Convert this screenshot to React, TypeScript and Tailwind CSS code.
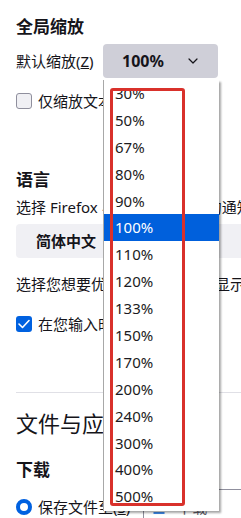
import React from "react";

const zoomLevels = ["30%", "50%", "67%", "80%", "90%", "100%", "110%", "120%", "133%", "150%", "170%", "200%", "240%", "300%", "400%", "500%"];

const ZoomList = () => {
  return (
    <div className="absolute left-[103px] top-[80px] w-[116px] h-[431px] bg-white border-l border-[#a8a8a8] shadow-[2px_2px_2px_rgba(0,0,0,0.35)] overflow-hidden">
      {zoomLevels.map((z) => (
        <div
          key={z}
          className={
            z === "100%"
              ? "h-[26.9px] flex items-center pl-[11px] text-[15px] leading-none bg-[#0060dc] text-white"
              : "h-[26.9px] flex items-center pl-[11px] text-[15px] leading-none text-[#1c1b22]"
          }
        >
          {z}
        </div>
      ))}
    </div>
  );
};

export default function App() {
  return (
    <div
      className="relative w-[241px] h-[518px] overflow-hidden bg-white text-[#15141a] whitespace-nowrap"
      style={{ fontFamily: '"Noto Sans", "Noto Sans CJK SC", sans-serif' }}
    >
      <div className="flex flex-col pl-4 pt-[15px]">
        <h2 className="text-[17px] font-bold leading-[24px]">全局缩放</h2>

        {/* default zoom row */}
        <div className="mt-[5px] flex items-center h-[34px]">
          <span className="w-[87px] shrink-0 text-[15px] leading-[20px]">
            默认缩放(<span className="underline">Z</span>)
          </span>
          <div className="w-[115px] shrink-0 h-[34px] rounded-[4px] bg-[#cfcfd8] flex items-center pl-[19px]">
            <span className="text-[16px] font-bold leading-none">100%</span>
            <svg className="ml-auto mr-[20px]" width="10" height="6" viewBox="0 0 10 6" fill="none">
              <path d="M1 1l4 4 4-4" stroke="#15141a" strokeWidth="1.2" strokeLinecap="round" strokeLinejoin="round" />
            </svg>
          </div>
        </div>

        <div className="mt-[13px] flex items-center h-[20px] gap-[6px]">
          <div className="w-4 h-4 shrink-0 rounded-[3px] border border-[#8f8f9d] bg-[#f0f0f4]" />
          <span className="text-[15px] leading-[20px]">仅缩放文本</span>
        </div>

        {/* language */}
        <h2 className="mt-[57px] text-[17px] font-bold leading-[24px]">语言</h2>
        <p className="mt-[5px] text-[15px] leading-[20px]">选择 Firefox 界面菜单、消息的通知语言</p>
        <div className="mt-[7px] flex gap-2">
          <div className="w-[140px] shrink-0 h-[34px] rounded-[4px] bg-[#f0f0f4] flex items-center pl-[20px]">
            <span className="text-[15px] font-bold leading-none">简体中文</span>
          </div>
          <div className="w-[140px] shrink-0 h-[34px] rounded-[4px] bg-[#f0f0f4]" />
        </div>
        <p className="mt-[16px] text-[15px] leading-[20px]">选择您想要优先用的网页语言 显示</p>
        <div className="mt-[20px] flex items-center h-[20px] gap-[6px]">
          <div className="w-4 h-4 shrink-0 rounded-[3px] bg-[#0061e0] flex items-center justify-center">
            <svg width="12" height="10" viewBox="0 0 12 10" fill="none">
              <path d="M1 5l3.5 3.5L11 1.5" stroke="white" strokeWidth="1.6" strokeLinecap="round" strokeLinejoin="round" />
            </svg>
          </div>
          <span className="text-[15px] leading-[20px]">在您输入时检查拼写</span>
        </div>

        <div className="mt-[58px] border-t border-[#e0e0e6]" />

        {/* files and applications */}
        <h1 className="mt-[15px] text-[22px] font-normal leading-[30px]">文件与应用程序</h1>
        <h2 className="mt-[20px] text-[17px] font-bold leading-[24px]">下载</h2>
        <div className="mt-[7px] flex items-center h-[36px]">
          <div className="w-4 h-4 shrink-0 rounded-full border-[4px] border-[#0061e0] bg-white" />
          <span className="ml-[6px] shrink-0 text-[15px] leading-[20px]">
            保存文件至(<span className="underline">S</span>)
          </span>
          <div className="ml-[13px] shrink-0 w-[200px] h-[36px] rounded-[4px] border border-[#8f8f9d] flex items-center pl-[9px] gap-[12px]">
            <svg width="12" height="14" viewBox="0 0 12 14" fill="none">
              <path d="M6 1v9M2 6l4 4 4-4" stroke="#0061e0" strokeWidth="2" strokeLinecap="round" strokeLinejoin="round" />
              <path d="M1 13h10" stroke="#0061e0" strokeWidth="1.5" strokeLinecap="round" />
            </svg>
            <span className="text-[15px] leading-[20px] text-[#5b5b66]">下载</span>
          </div>
        </div>
      </div>

      <ZoomList />

      {/* red annotation box */}
      <div className="absolute left-[110px] top-[88px] w-[75px] h-[418px] border-[3px] border-[#d9312b] rounded-[3px]" />
    </div>
  );
}
